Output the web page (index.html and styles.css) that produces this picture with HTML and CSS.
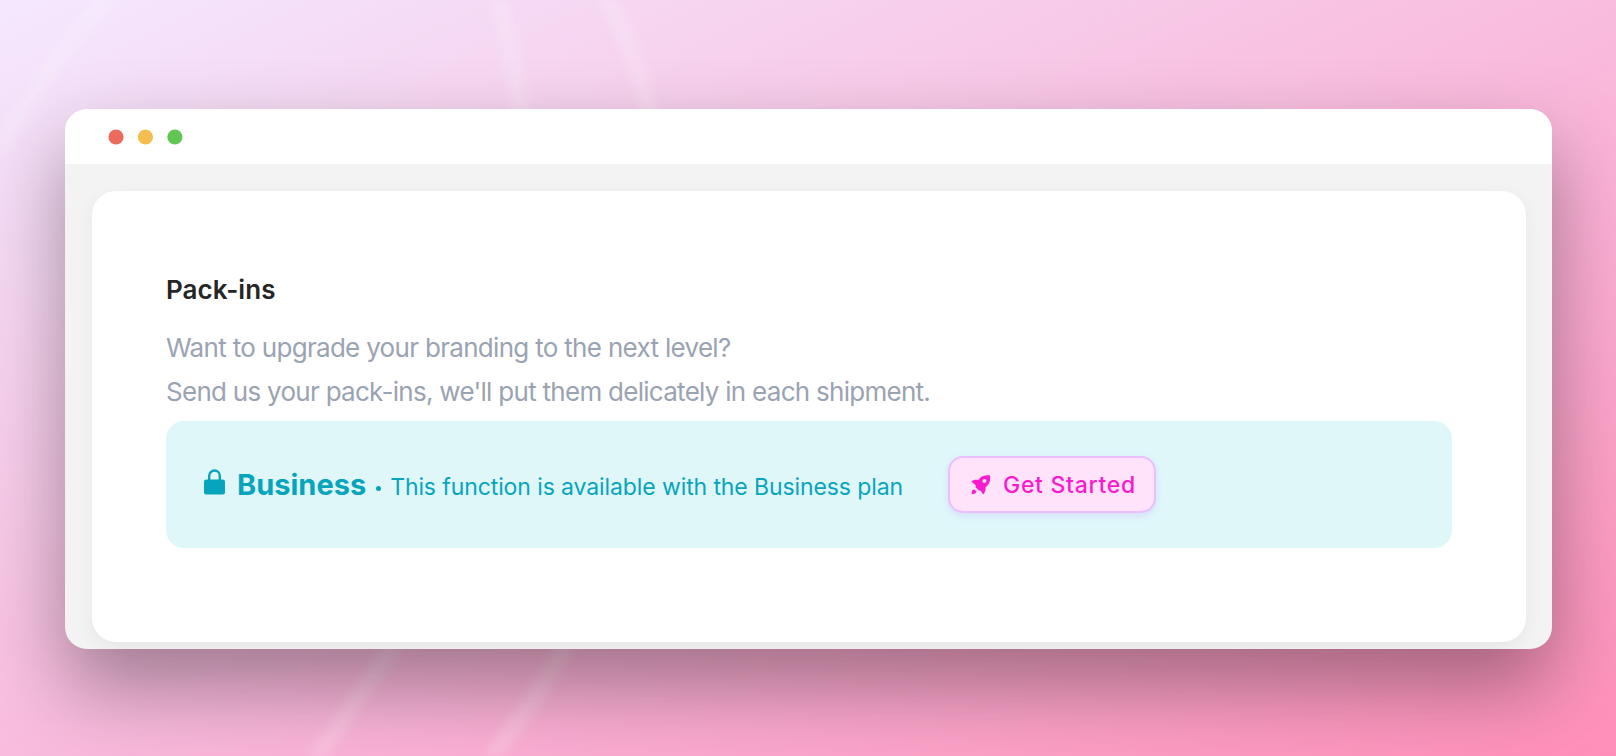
FILE: index.html
```
<!DOCTYPE html>
<html lang="en">
<head>
  <meta charset="UTF-8">
  <title>Pack-ins</title>
  <link rel="stylesheet" href="styles.css">
</head>
<body>

<div class="page">
  <!-- light streaks in the background -->
  <svg class="streaks" viewBox="0 0 1616 756" aria-hidden="true">
    <path d="M120 -14 Q50 60 -14 166" />
    <path d="M493 -20 Q512 50 523 130" />
    <path d="M596 -20 Q640 50 651 130" />
    <path d="M404 630 Q370 680 308 770" />
    <path d="M574 630 Q544 690 482 770" />
  </svg>

  <main class="window">
    <header class="titlebar">
      <svg class="dots" viewBox="0 0 75 16" aria-hidden="true">
        <circle class="dot-red" cx="8" cy="8" r="7.6" />
        <circle class="dot-yellow" cx="37.4" cy="8" r="7.6" />
        <circle class="dot-green" cx="66.900" cy="8" r="7.6" />
      </svg>
    </header>

    <section class="card">
      <h1>Pack-ins</h1>
      <p class="intro">
        <span class="line-one">Want to upgrade your branding to the next level?</span><br>
        <span class="line-two">Send us your pack-ins, we'll put them delicately in each shipment.</span>
      </p>

      <!-- plan notice -->
      <div class="notice">
        <svg class="lock" viewBox="0 0 21 26" aria-hidden="true">
          <path d="M5.2 12V6.800a5.300 5.300 0 0 1 10.600 0V12" fill="none" stroke="currentColor" stroke-width="2.4" />
          <rect x="0" y="10.5" width="21" height="15" rx="2.2" fill="currentColor" />
        </svg>
        <strong class="plan">Business</strong>
        <span class="bullet"></span>
        <span class="message">This function is available with the Business plan</span>
        <button class="start" type="button">
          <svg class="rocket" viewBox="0 0 20 20" aria-hidden="true">
            <path fill="currentColor" fill-rule="evenodd" d="M19 .5C14.500 0 11.500 .7 9 3L7.200 4.900C4 4.500 1.900 5 .3 6.500L4.700 10.300 4.500 12.200 8 15.500 9.800 15.700 12 19.500C14 17.500 14.900 15.200 14.400 12.500L16.600 10.300C18.900 7.900 19.500 4.800 19 .5ZM13.400 3.900a2 2 0 1 1 0 4 2 2 0 0 1 0-4Z" />
            <path fill="currentColor" d="M3.200 14.200C1.200 14.800 .6 16.600 .6 19.300 3.200 19.300 4.900 18.600 5.500 16.600Z" />
          </svg>
          <span>Get Started</span>
        </button>
      </div>
    </section>
  </main>
</div>

</body>
</html>
```

FILE: styles.css
```
* {
  box-sizing: border-box;
}

body {
  margin: 0;
  font-family: Inter, "Liberation Sans", sans-serif;
}

.page {
  display: grid;
  height: 756px;
  overflow: hidden;
  background: linear-gradient(to bottom right, #f4e8ff 0%, #f9bcde 50%, #ff8fb9 100%);
}

.streaks {
  grid-area: 1 / 1;
  width: 1616px;
  height: 756px;
  fill: none;
  stroke: rgba(255, 255, 255, 0.18);
  stroke-width: 18px;
  filter: blur(5px);
}

.window {
  grid-area: 1 / 1;
  display: flex;
  flex-direction: column;
  z-index: 1;
  width: 1487px;
  height: 540px;
  margin: 109px 0 0 64.5px;
  overflow: hidden;
  background: #f3f3f3;
  border-radius: 22px;
  box-shadow: 0 38px 80px rgba(0, 0, 0, 0.36);
}

/* title bar */
.titlebar {
  display: flex;
  flex: none;
  align-items: center;
  height: 55px;
  padding: 1px 0 0 43.5px;
  background: white;
}

.dots {
  width: 75px;
  height: 16px;
}

.dot-red {
  fill: #ec6a5e;
}

.dot-yellow {
  fill: #f4bd4f;
}

.dot-green {
  fill: #61c554;
}

/* card */
.card {
  flex: none;
  height: 451px;
  margin: 27px 26px 0 27.5px;
  padding: 81px 74px 0;
  background: white;
  border-radius: 24px;
  box-shadow: 0 6px 18px rgba(0, 0, 0, 0.05);
}

h1 {
  margin: 0;
  font-size: 26px;
  font-weight: 600;
  line-height: 36px;
  letter-spacing: 0.05px;
  color: #262626;
}

.intro {
  margin: 18px 0 7px;
  font-size: 26px;
  line-height: 44px;
  color: #9aa3b2;
  white-space: nowrap;
}

.line-one {
  letter-spacing: -0.69px;
}

.line-two {
  letter-spacing: -0.72px;
}

/* notice */
.notice {
  display: flex;
  align-items: center;
  height: 127px;
  padding-left: 38px;
  background: #dff7f9;
  border-radius: 18px;
  color: #06a5bd;
  white-space: nowrap;
}

.lock {
  width: 21px;
  height: 26px;
  margin: 0 12px 5px 0;
}

.plan {
  font-size: 29px;
  font-weight: 700;
  letter-spacing: 0;
}

.bullet {
  width: 5px;
  height: 5px;
  margin: 8px 9px 0 10px;
  background: currentColor;
  border-radius: 50%;
}

.message {
  margin-top: 4px;
  font-size: 23px;
  letter-spacing: -0.1px;
}

.start {
  display: flex;
  align-items: center;
  gap: 12px;
  width: 208px;
  height: 57px;
  margin-left: 45px;
  padding: 0 0 0 21px;
  background: #ffe3fb;
  border: 2px solid #eabffb;
  border-radius: 15px;
  box-shadow: 0 3px 6px rgba(190, 150, 255, 0.25);
  color: #f81bce;
  font-family: inherit;
  font-size: 23px;
  font-weight: 500;
  letter-spacing: 0.7px;
}

.rocket {
  width: 20px;
  height: 20px;
  flex: none;
}
```
